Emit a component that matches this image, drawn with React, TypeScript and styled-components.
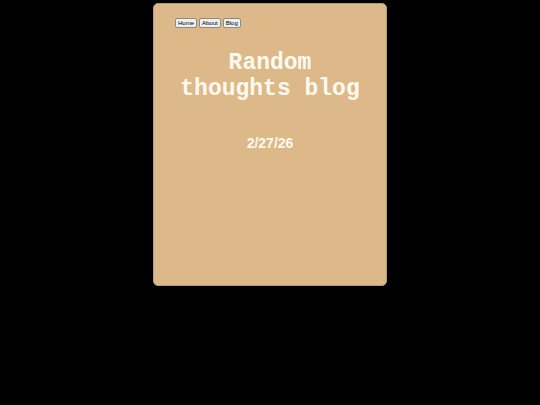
import React from 'react';
import styled, { createGlobalStyle } from 'styled-components';

const GlobalStyle = createGlobalStyle`
  html, body {
    margin: 0;
    padding: 0;
    background: #000;
  }
`;

const Page = styled.div`
  width: 234px;
  margin: 3px auto 0;
  height: 283px;
  box-sizing: border-box;
  background: #ddb888;
  border: 1px solid #b89a72;
  border-radius: 5px;
  padding: 14px 0 0 21px;
`;

const Nav = styled.nav`
  display: flex;
  gap: 2px;
`;

const NavButton = styled.button`
  font-family: "Liberation Sans", Arial, sans-serif;
  font-size: 6px;
  line-height: 8px;
  height: 10px;
  padding: 0 2px;
  background: #efefef;
  color: #000;
  border: 1px solid #8a8a8a;
  border-radius: 2px;
`;

const Title = styled.h1`
  margin: 22px 21px 0 0;
  text-align: center;
  font-family: "Liberation Mono", "Courier New", monospace;
  font-weight: bold;
  font-size: 23px;
  line-height: 26px;
  color: #fffaf0;
`;

const DateLine = styled.p`
  margin: 33px 21px 0 0;
  text-align: center;
  font-family: "Liberation Sans", Arial, sans-serif;
  font-weight: bold;
  font-size: 14px;
  color: #fffaf0;
`;

const App: React.FC = () => (
  <>
    <GlobalStyle />
    <Page>
      <Nav>
        <NavButton>Home</NavButton>
        <NavButton>About</NavButton>
        <NavButton>Blog</NavButton>
      </Nav>
      <Title>
        Random
        <br />
        thoughts blog
      </Title>
      <DateLine>2/27/26</DateLine>
    </Page>
  </>
);

export default App;
